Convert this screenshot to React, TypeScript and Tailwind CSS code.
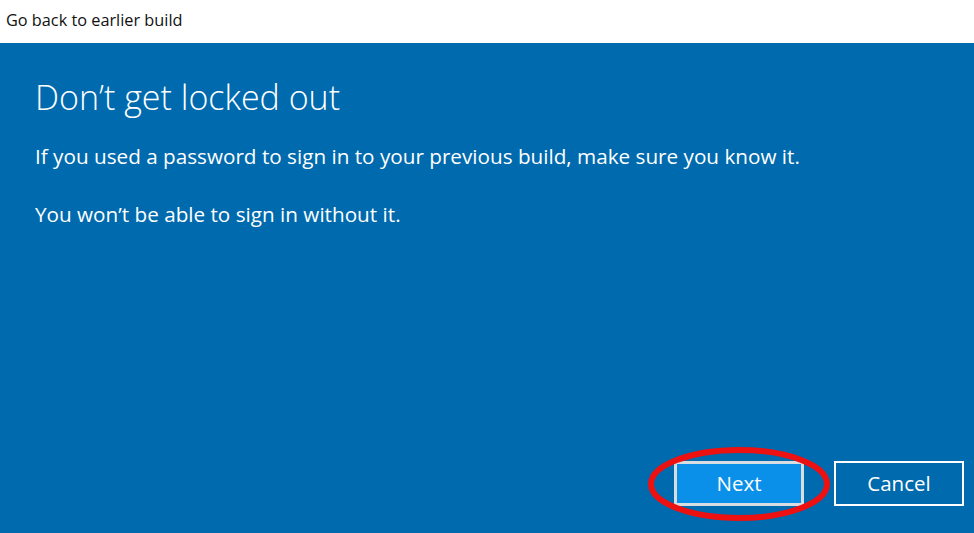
import React from "react";

export default function App() {
  return (
    <div className="w-[974px] h-[533px] flex flex-col overflow-hidden" style={{ fontFamily: '"Open Sans", "Noto Sans", sans-serif' }}>
      <div className="h-[43px] bg-white flex items-center pl-[6px] pb-[2px]">
        <span className="text-[16.3px] text-[#111]">Go back to earlier build</span>
      </div>
      <div className="flex-1 bg-[#006aae] flex flex-col pl-[35px] pr-[10px] pt-[31px] pb-[27px] text-white relative">
        <h1 className="text-[34px] font-light leading-[46px]">Don’t get locked out</h1>
        <p className="mt-[22px] text-[20.7px] leading-[28px]">If you used a password to sign in to your previous build, make sure you know it.</p>
        <p className="mt-[30px] text-[20.7px] leading-[28px]">You won’t be able to sign in without it.</p>
        <div className="mt-auto flex justify-end gap-[30px]">
          <div className="relative">
            <button className="w-[130px] h-[45px] bg-[#0a90e8] border-[3px] border-[#d8dde2] text-[20.5px] text-white flex items-center justify-center">Next</button>
            <svg className="absolute left-[-28px] top-[-15px] pointer-events-none" width="186" height="78" viewBox="0 0 186 78">
              <ellipse cx="93" cy="38" rx="88" ry="34" fill="none" stroke="#ee1111" strokeWidth="6" />
            </svg>
          </div>
          <button className="w-[130px] h-[45px] bg-[#006aae] border-[2px] border-white text-[20.5px] text-white flex items-center justify-center">Cancel</button>
        </div>
      </div>
    </div>
  );
}
